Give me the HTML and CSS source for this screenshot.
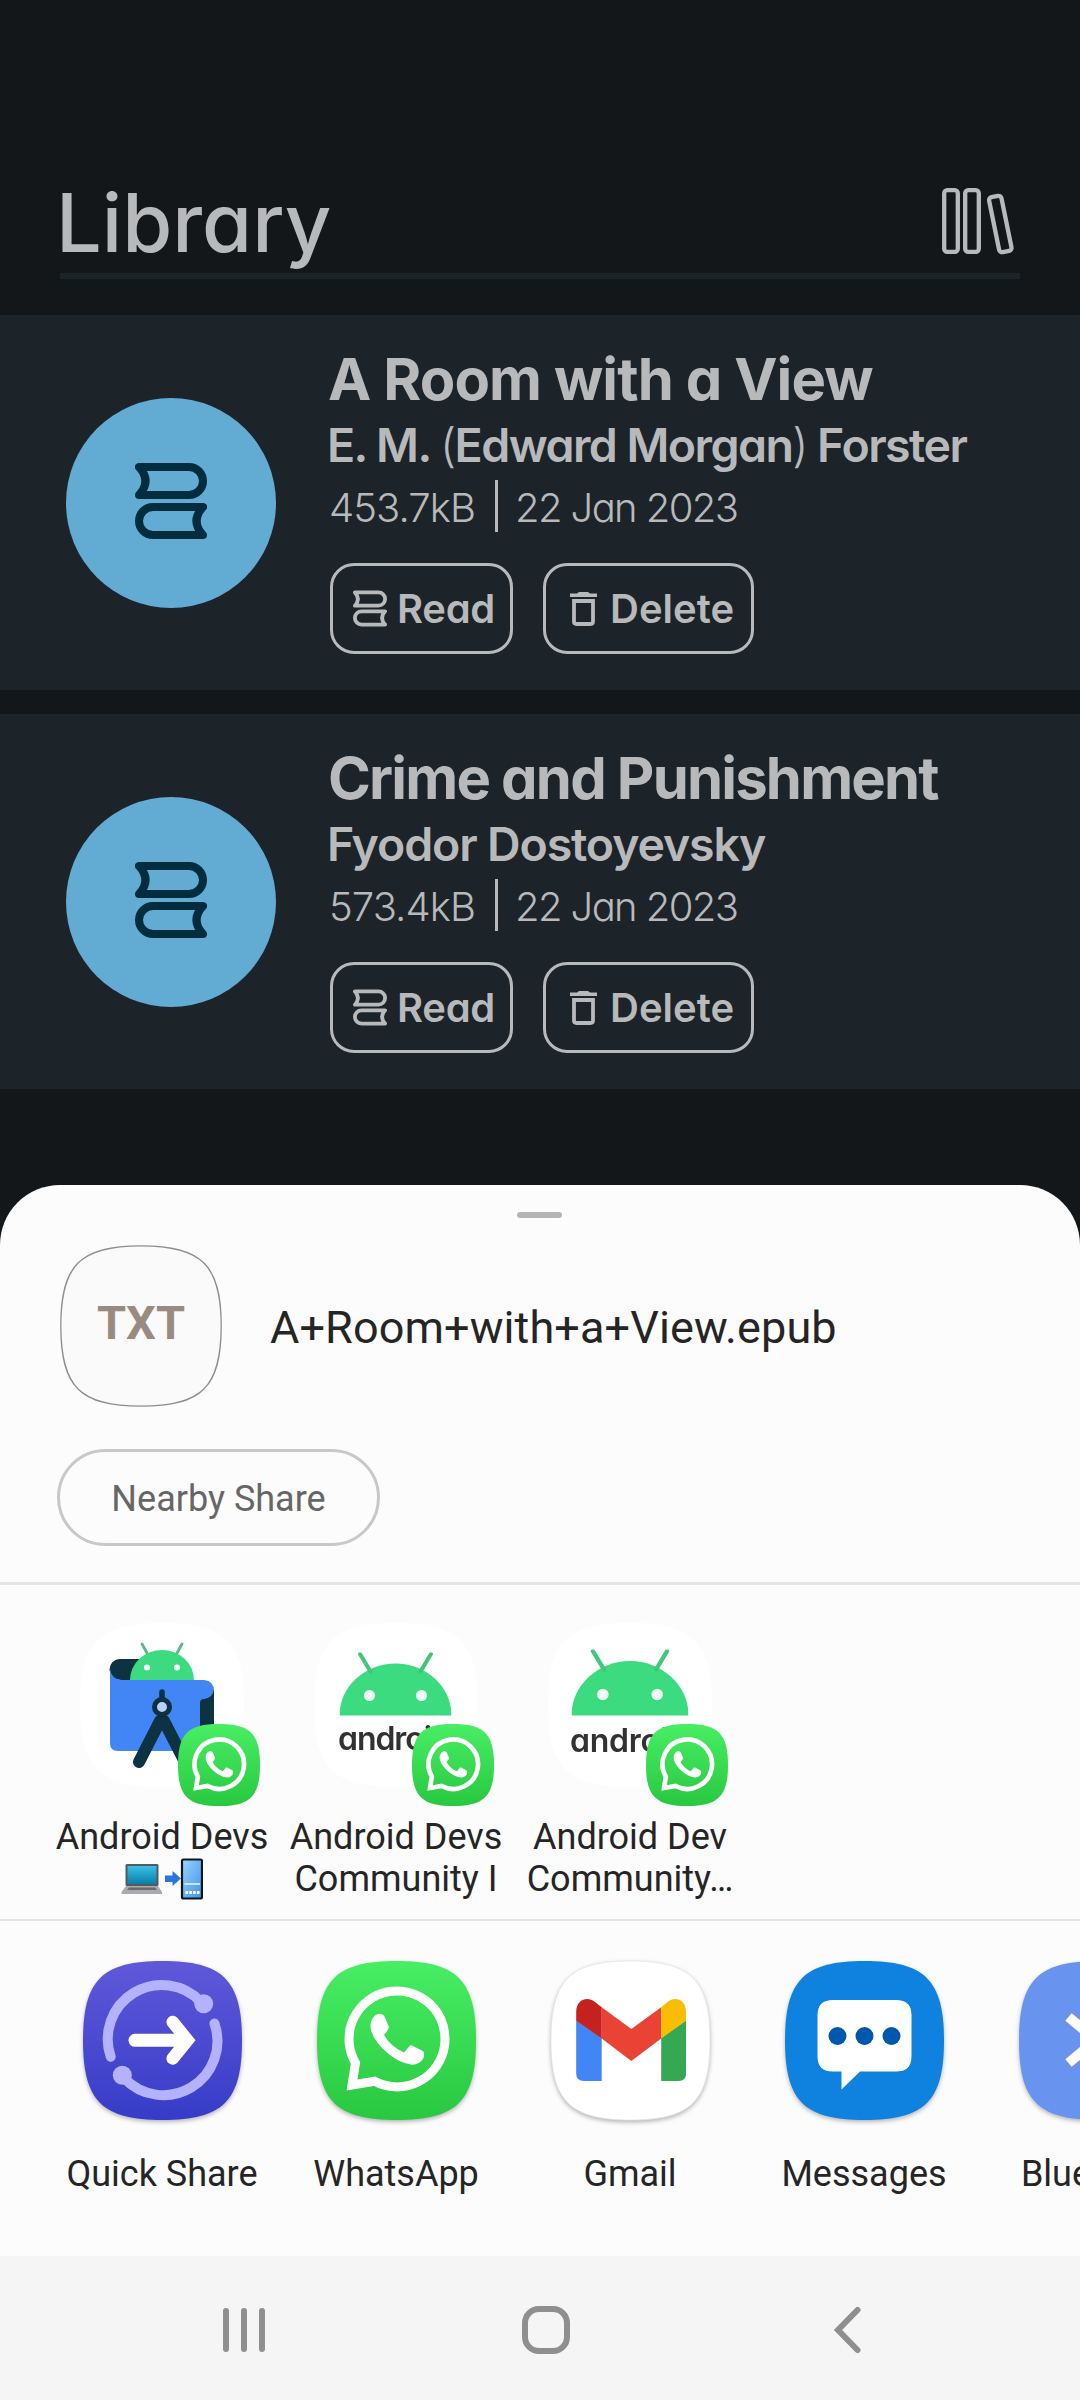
FILE: index.html
```html
<!DOCTYPE html>
<html lang="en">
<head>
<meta charset="utf-8">
<title>Library</title>
<link rel="stylesheet" href="styles.css">
</head>
<body>
<svg class="defs" aria-hidden="true">
  <defs>
    <linearGradient id="wa" x1="0" y1="0" x2="0" y2="1"><stop offset="0" stop-color="#48ee64"/><stop offset="1" stop-color="#28c840"/></linearGradient>
    <linearGradient id="qs" x1="0" y1="0" x2="0" y2="1"><stop offset="0" stop-color="#6058d9"/><stop offset="1" stop-color="#363cc8"/></linearGradient>
    <linearGradient id="screen" x1="0" y1="0" x2="0" y2="1"><stop offset="0" stop-color="#37c0e6"/><stop offset="1" stop-color="#0b7fa8"/></linearGradient>
    <linearGradient id="phone" x1="0" y1="0" x2="1" y2="1"><stop offset="0" stop-color="#9bd3ff"/><stop offset="1" stop-color="#3c93ee"/></linearGradient>
    <filter id="soft"><feGaussianBlur stdDeviation="0.7"/></filter>
    <path id="squircle" d="M50 0C12 0 0 12 0 50S12 100 50 100 100 88 100 50 88 0 50 0Z"/>
    <symbol id="books" viewBox="0 0 72 76">
      <g fill="none" stroke="currentColor" stroke-width="8" stroke-linejoin="round" stroke-linecap="round">
        <path d="M4 4H54A14 14 0 0 1 54 32H4Q17 18 4 4Z"/>
        <path d="M68 44H18A14 14 0 0 0 18 72H68Q55 58 68 44Z"/>
      </g>
    </symbol>
    <symbol id="trash" viewBox="0 0 27 34">
      <path d="M0 1.500H7L9 0H18L20 1.500H27V5H0Z" fill="currentColor"/>
      <path d="M4 9H23V29.500Q23 32 20.500 32H6.500Q4 32 4 29.500Z" fill="none" stroke="currentColor" stroke-width="3.800"/>
    </symbol>
    <symbol id="whatsapp" viewBox="0 0 159 159">
      <use href="#squircle" transform="scale(1.590)" fill="url(#wa)"/>
      <path d="M38.500 102A48 48 0 1 1 57.500 120.300L35 124Z" fill="none" stroke="#fff" stroke-width="9"/>
      <path d="M58 54.500Q63 51 67 54.500L72 66Q72 68 67 74Q74 86 87 91.500L93 84.500Q94.500 84 96 85L106 90Q108 92 106.500 97Q103 103.500 95 103.700Q80 102 66 88Q53 75 53.500 64Q54 58 58 54.500Z" fill="#fff"/>
    </symbol>
    <symbol id="droid" viewBox="0 0 112 64">
      <path d="M0 63A56 52 0 0 1 112 63Z" fill="#3ddb80"/>
      <path d="M20.500 1.500L31 19M91.500 1.500L81 19" stroke="#3fc77c" stroke-width="4" stroke-linecap="round"/>
      <circle cx="30" cy="43" r="5.500" fill="#effff5"/><circle cx="82" cy="43" r="5.500" fill="#effff5"/>
    </symbol>
  </defs>
</svg>

<div class="phone">
  <main class="library">
    <header class="header">
      <h1 class="heading">Library</h1>
      <svg class="shelf" viewBox="0 0 74 68" fill="none" stroke="currentColor" stroke-width="4.300">
        <rect x="3.200" y="3.200" width="13.600" height="61.600" rx="3"/>
        <rect x="24.200" y="3.200" width="13.600" height="61.600" rx="3"/>
        <rect x="-6.300" y="-28" width="12.600" height="56" rx="3" transform="translate(59.300 37) rotate(-11.500)"/>
      </svg>
    </header>

    <article class="book book-room">
      <div class="cover"><svg class="cover-icon"><use href="#books"/></svg></div>
      <div class="details">
        <h2 class="title">A Room with a View</h2>
        <p class="author">E. M. <span class="paren">(</span>Edward Morgan<span class="paren">)</span> Forster</p>
        <p class="meta"><span class="size">453.7kB</span><i class="rule"></i><span class="date">22 Jan 2023</span></p>
        <div class="actions">
          <button class="action"><svg class="read-icon"><use href="#books"/></svg>Read</button>
          <button class="action action-delete"><svg class="trash-icon"><use href="#trash"/></svg>Delete</button>
        </div>
      </div>
    </article>

    <article class="book book-crime">
      <div class="cover"><svg class="cover-icon"><use href="#books"/></svg></div>
      <div class="details">
        <h2 class="title">Crime and Punishment</h2>
        <p class="author">Fyodor Dostoyevsky</p>
        <p class="meta"><span class="size">573.4kB</span><i class="rule"></i><span class="date">22 Jan 2023</span></p>
        <div class="actions">
          <button class="action"><svg class="read-icon"><use href="#books"/></svg>Read</button>
          <button class="action action-delete"><svg class="trash-icon"><use href="#trash"/></svg>Delete</button>
        </div>
      </div>
    </article>
  </main>

  <section class="sheet">
    <div class="handle"></div>
    <div class="file">
      <div class="thumb">
        <svg class="thumb-frame" viewBox="-0.500 -0.500 101 101"><use href="#squircle" fill="#fafafa" stroke="#8d8d8d" stroke-width="0.800"/></svg>
        <span class="thumb-label">TXT</span>
      </div>
      <span class="filename">A+Room+with+a+View.epub</span>
    </div>
    <button class="nearby">Nearby Share</button>

    <div class="contacts">
      <div class="contact">
        <div class="avatar">
          <svg class="avatar-pic" viewBox="0 0 164 164">
            <use href="#squircle" transform="scale(1.640)" fill="#fff"/>
            <g filter="url(#soft)">
              <path d="M40 36H66V57H40A10.500 10.500 0 0 1 40 36Z" fill="#073042"/>
              <path d="M30 46Q32 57 42 57H124Q134 58 134 68V120Q134 128 126 128H38Q30 128 30 120Z" fill="#4285f4"/>
              <path d="M120 128V80Q120 76 124 76Q133 75 134 66V128Z" fill="#073042"/>
              <path d="M50 57A32 30 0 0 1 114 57Z" fill="#3ddb80"/>
              <path d="M62 21L67 30M102 21L97 30" stroke="#58b989" stroke-width="2.800" stroke-linecap="round"/>
              <circle cx="67" cy="44.500" r="3" fill="#fff"/><circle cx="97" cy="44.500" r="3" fill="#fff"/>
              <g stroke="#073042" fill="none" stroke-linecap="round">
                <path d="M82 69V75" stroke-width="5.500"/>
                <path d="M80 98L59 139M84 98L105 139" stroke-width="12"/>
                <circle cx="82" cy="84" r="7.500" stroke-width="5" fill="#b9d0fa"/>
              </g>
            </g>
          </svg>
          <svg class="badge"><use href="#whatsapp"/></svg>
        </div>
        <p class="name">Android Devs
          <svg class="emoji" viewBox="0 0 82 42">
            <rect x="4.500" y="6" width="33" height="22" rx="1.500" fill="#55585c"/>
            <rect x="6.500" y="8" width="29" height="18" fill="url(#screen)"/>
            <path d="M5 28H37L41 34V36H0.500V34Z" fill="#a9abad"/><path d="M8 29.500H34L36 32H6Z" fill="#696b6e"/>
            <path d="M44 17.500H51.500V13L60 20.500L51.500 28V24H44Z" fill="#2b74d8"/>
            <rect x="61" y="1.500" width="20" height="39" rx="1.500" fill="url(#phone)" stroke="#10141c" stroke-width="2.200"/>
            <path d="M63.500 26H79" stroke="#d8efff" stroke-width="1.800"/>
            <path d="M64.500 34.500H78.500" stroke="#fff" stroke-width="3" stroke-dasharray="2.600 1.200"/>
          </svg>
        </p>
      </div>
      <div class="contact">
        <div class="avatar">
          <svg class="avatar-pic" viewBox="0 0 164 164">
            <use href="#squircle" transform="scale(1.640)" fill="#fff"/>
            <g filter="url(#soft)">
              <use href="#droid" x="25.500" y="29.500" width="112" height="64"/>
              <text class="wordmark" x="24" y="127" textLength="113">android</text>
            </g>
          </svg>
          <svg class="badge"><use href="#whatsapp"/></svg>
        </div>
        <p class="name">Android Devs Community I</p>
      </div>
      <div class="contact">
        <div class="avatar">
          <svg class="avatar-pic" viewBox="0 0 164 164">
            <use href="#squircle" transform="scale(1.640)" fill="#fff"/>
            <g filter="url(#soft)">
              <use href="#droid" x="23.500" y="26.500" width="117" height="67"/>
              <text class="wordmark" x="22" y="129" textLength="118">android</text>
            </g>
          </svg>
          <svg class="badge"><use href="#whatsapp"/></svg>
        </div>
        <p class="name">Android Dev Community…</p>
      </div>
    </div>

    <div class="apps">
      <div class="app">
        <svg class="app-icon" viewBox="0 0 159 159">
          <use href="#squircle" transform="scale(1.590)" fill="url(#qs)"/>
          <g fill="none" stroke="#b4b2ff" stroke-width="10" stroke-linecap="round">
            <path d="M27.700 95.700A54 54 0 0 1 118 41"/><path d="M131.500 62.500A54 54 0 0 1 41 117"/>
          </g>
          <circle cx="120.700" cy="42.700" r="9.500" fill="#b4b2ff"/><circle cx="39.300" cy="114.300" r="9.500" fill="#b4b2ff"/>
          <path d="M52 79.300H100" stroke="#fff" stroke-width="13" stroke-linecap="round"/>
          <path d="M89.700 61L104.500 79.300L89.700 97.500" fill="none" stroke="#fff" stroke-width="12.500" stroke-linecap="round"/>
        </svg>
        <span class="app-name">Quick Share</span>
      </div>
      <div class="app"><svg class="app-icon"><use href="#whatsapp"/></svg><span class="app-name">WhatsApp</span></div>
      <div class="app">
        <svg class="app-icon" viewBox="0 0 159 159">
          <use href="#squircle" transform="scale(1.590)" fill="#fff" stroke="#e4e4e4" stroke-width="0.500"/>
          <path d="M25.200 59.500L50.700 77V120H33Q25.200 120 25.200 112.500Z" fill="#4285f4"/>
          <path d="M135 59.500L110.200 77V120H127.500Q135 120 135 112.500Z" fill="#34a853"/>
          <path d="M50.700 46.300L80.300 68L110.200 46.300V77.500L80.300 100L50.700 77.500Z" fill="#ea4335"/>
          <path d="M50.700 46.300V77.500L25.200 59.700V51C25.200 38 37 35 44 41Z" fill="#c5221f"/>
          <path d="M110.200 46.300V77.500L135 59.700V51C135 38 123.500 35 116.500 41Z" fill="#fbbc04"/>
        </svg>
        <span class="app-name">Gmail</span>
      </div>
      <div class="app">
        <svg class="app-icon" viewBox="0 0 159 159">
          <use href="#squircle" transform="scale(1.590)" fill="#0f82df"/>
          <path d="M48 39H111Q126.500 39 126.500 54V95.500Q126.500 110.600 111 110.600H75L56.500 128.500V110.600H48Q32.500 110.600 32.500 95.500V54Q32.500 39 48 39Z" fill="#fff"/>
          <g fill="#0057ae"><circle cx="52.500" cy="75" r="9"/><circle cx="79.500" cy="75" r="9"/><circle cx="106.500" cy="75" r="9"/></g>
        </svg>
        <span class="app-name">Messages</span>
      </div>
      <div class="app">
        <svg class="app-icon" viewBox="0 0 159 159">
          <use href="#squircle" transform="scale(1.590)" fill="#6893ee"/>
          <path d="M49.500 56L104 101L78 124V34L104 57L49.500 102" fill="none" stroke="#fff" stroke-width="10"/>
        </svg>
        <span class="app-name">Bluetooth</span>
      </div>
    </div>
  </section>

  <nav class="navbar">
    <svg class="nav-icon" viewBox="0 0 50 50"><path d="M7 6V44M25 6V44M43 6V44"/></svg>
    <svg class="nav-icon" viewBox="0 0 50 50"><rect x="4" y="4" width="42" height="42" rx="14"/></svg>
    <svg class="nav-icon" viewBox="0 0 50 50"><path d="M34.500 5L15 25L34.500 45"/></svg>
  </nav>
</div>
</body>
</html>
```
FILE: styles.css
```css
* { box-sizing: border-box; }
body, h1, h2, p { margin: 0; }
button { margin: 0; padding: 0; background: none; font: inherit; color: inherit; }
.defs { position: absolute; width: 0; height: 0; }

.phone {
  display: flex;
  flex-direction: column;
  width: 1080px;
  height: 2400px;
  overflow: hidden;
  background: #13171a;
  font-family: Roboto, sans-serif;
  font-size: 36px;
  color: #252525;
}

/* Library */
.library {
  display: flex;
  flex-direction: column;
  gap: 24px;
  height: 1185px;
  color: #b8b9bb;
  font-family: Inter, sans-serif;
  font-feature-settings: "cv11";
}
.header {
  display: flex;
  align-items: flex-end;
  justify-content: space-between;
  height: 279px;
  margin: 0 60px 12px;
  border-bottom: 6px solid #1b2528;
}
.heading { margin: 0 0 5px -4px; font-size: 81px; line-height: 90px; font-weight: 500; }
.shelf { width: 74px; height: 68px; margin: 0 5px 18px 0; }

.book {
  display: flex;
  height: 375px;
  padding: 34px 0 0 66px;
  background: #1c2329;
}
.cover {
  display: flex;
  align-items: center;
  justify-content: center;
  width: 210px;
  height: 210px;
  margin: 49px 53px 0 0;
  border-radius: 50%;
  background: #62abd2;
  color: #022d3e;
}
.cover-icon { width: 72px; height: 76px; margin-top: -4px; }
.title { margin-left: -1px; font-size: 58px; line-height: 60px; font-weight: 700; letter-spacing: -0.9px; white-space: nowrap; }
.author { margin: 8px 0 0 -2px; font-size: 46.5px; line-height: 56px; font-weight: 600; letter-spacing: -1.55px; white-space: nowrap; }
.book-crime .title { letter-spacing: -1.8px; }
.book-crime .author { letter-spacing: -1.15px; }
.paren { font-weight: 300; }
.meta { display: flex; margin-top: 7px; font-size: 40px; line-height: 55px; font-weight: 300; white-space: nowrap; }
.size { width: 166px; letter-spacing: -0.9px; }
.rule { width: 3px; height: 52px; margin-right: 17px; background: currentColor; }
.date { letter-spacing: -1.6px; }
.actions { display: flex; gap: 30px; margin: 28px 0 0 1px; }
.action {
  display: flex;
  align-items: center;
  width: 183px;
  height: 91px;
  padding-left: 20px;
  border: 3px solid #b8b9bb;
  border-radius: 24px;
  font-size: 40px;
  font-weight: 600;
  letter-spacing: -0.3px;
}
.action-delete { width: 211px; padding-left: 24px; letter-spacing: 0; }
.read-icon { width: 34px; height: 37px; margin-right: 10px; }
.trash-icon { width: 27px; height: 34px; margin-right: 13px; }

/* Share sheet */
.sheet {
  display: flex;
  flex-direction: column;
  height: 1071px;
  border-radius: 60px 60px 0 0;
  background: #fcfcfc;
}
.handle { width: 45px; height: 6px; margin: 27px 0 0 517px; border-radius: 3px; background: #b5b5b5; }
.file { display: flex; align-items: center; height: 162px; margin: 27px 0 0 60px; }
.thumb { display: grid; place-items: center; width: 162px; height: 162px; margin-right: 48px; }
.thumb-frame, .thumb-label { grid-area: 1 / 1; }
.thumb-frame { width: 162px; height: 162px; }
.thumb-label { margin-top: -7px; font-size: 47px; font-weight: 700; color: #998b80; }
.filename { padding-top: 2px; font-size: 45px; letter-spacing: 0.1px; }
.nearby {
  width: 323px;
  height: 97px;
  margin: 42px 0 36px 57px;
  padding-top: 3px;
  border: 3px solid #c8c8c8;
  border-radius: 49px;
  color: #666;
}
.contacts {
  display: flex;
  height: 339px;
  padding: 38px 0 0 45px;
  border-top: 3px solid #e5e5e5;
  border-bottom: 2px solid #e3e3e3;
}
.contact { display: flex; flex-direction: column; align-items: center; width: 234px; }
.avatar { position: relative; width: 164px; height: 164px; }
.avatar-pic { width: 164px; height: 164px; }
.badge { position: absolute; left: 98px; top: 101px; width: 82px; height: 82px; }
.wordmark { font: 600 32px Inter, sans-serif; font-feature-settings: "cv11"; fill: #333; }
.name { width: 220px; margin-top: 29px; line-height: 42px; text-align: center; }
.emoji { display: block; width: 82px; height: 42px; margin: 0 auto; }

.apps { display: flex; padding: 40px 0 0 45px; overflow: hidden; }
.app { display: flex; flex: none; flex-direction: column; align-items: center; width: 234px; }
.app-icon { width: 159px; height: 159px; overflow: visible; filter: drop-shadow(0 2px 2px rgba(0, 0, 0, 0.28)); }
.app-name { margin-top: 33px; line-height: 42px; }

/* System navigation */
.navbar { display: flex; justify-content: space-between; padding: 49px 207px 0 219px; height: 144px; background: #f5f5f5; }
.nav-icon { width: 50px; height: 50px; fill: none; stroke: #8f8f8f; stroke-width: 6; stroke-linecap: round; }
```
